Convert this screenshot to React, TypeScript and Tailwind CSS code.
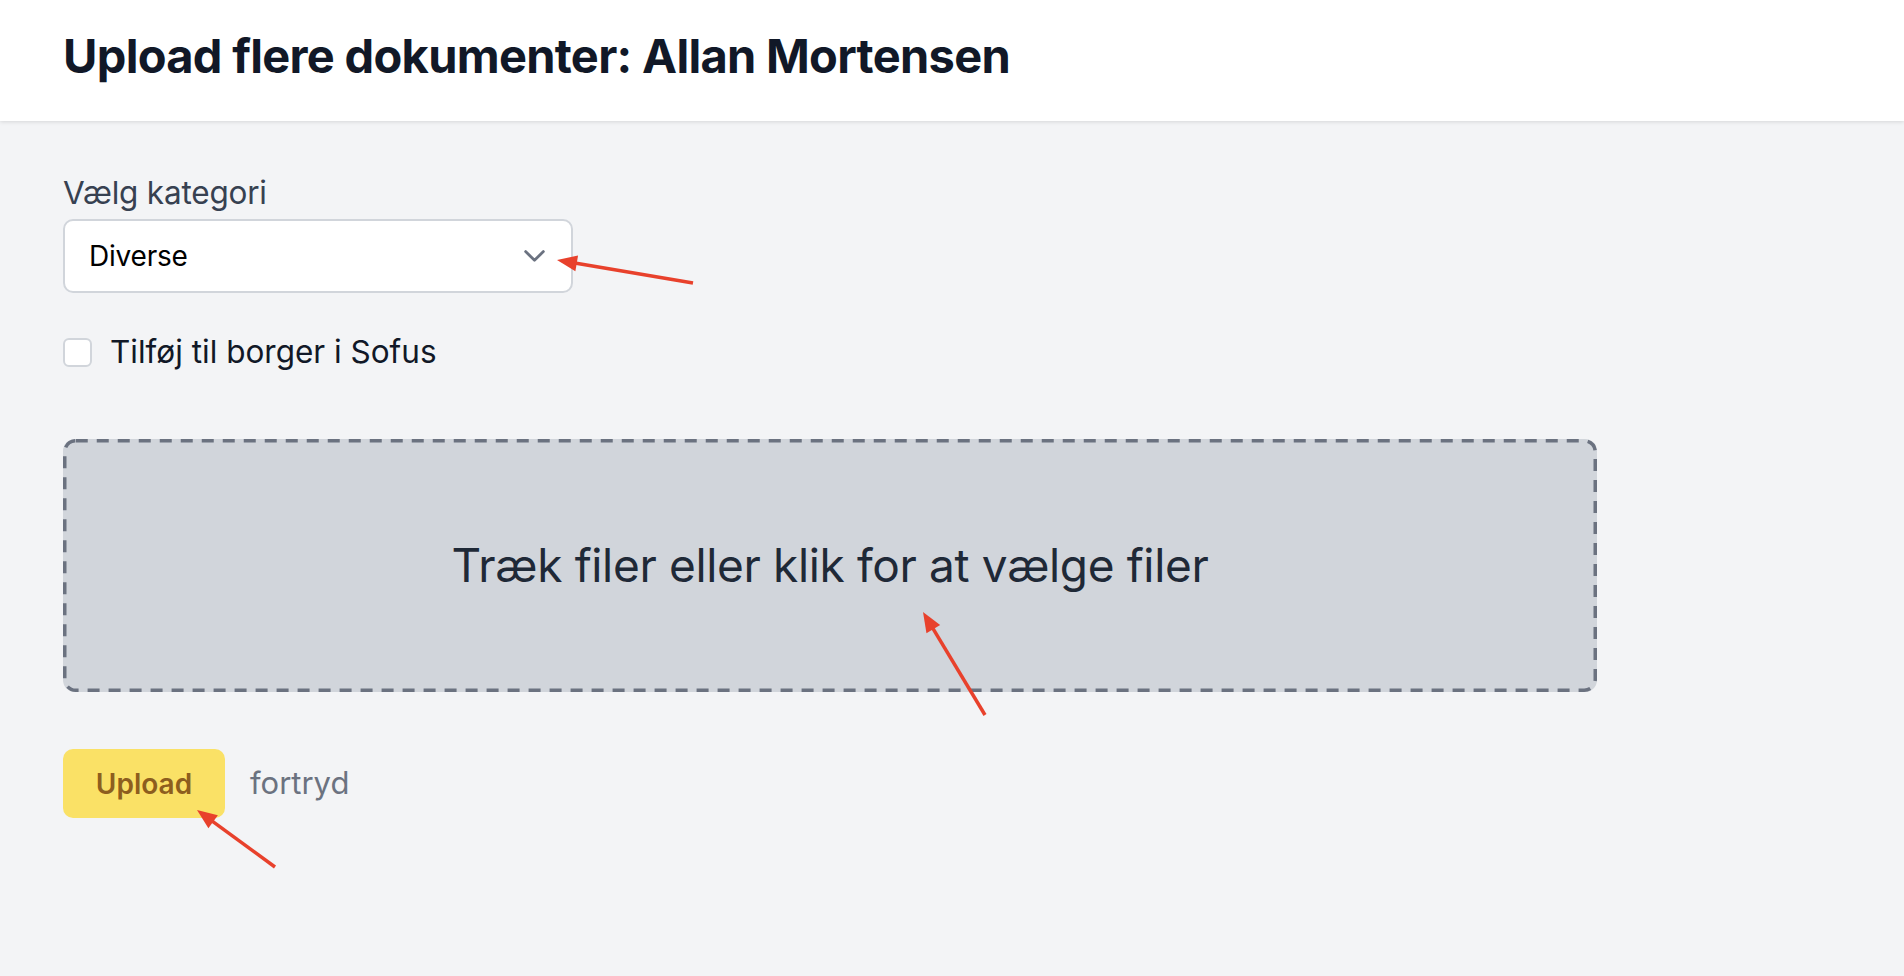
import React from "react";

type Arrow = { x1: number; y1: number; x2: number; y2: number };

const arrows: Arrow[] = [
  { x1: 693, y1: 283, x2: 557, y2: 260 },
  { x1: 985, y1: 715, x2: 923, y2: 612 },
  { x1: 275, y1: 867, x2: 197, y2: 810 },
];

function ArrowShape({ a }: { a: Arrow }) {
  const dx = a.x2 - a.x1;
  const dy = a.y2 - a.y1;
  const len = Math.sqrt(dx * dx + dy * dy);
  const ux = dx / len;
  const uy = dy / len;
  const headLen = 20;
  const headW = 8;
  const bx = a.x2 - ux * headLen;
  const by = a.y2 - uy * headLen;
  const px = -uy;
  const py = ux;
  const pts = `${a.x2},${a.y2} ${bx + px * headW},${by + py * headW} ${bx - px * headW},${by - py * headW}`;
  return (
    <g>
      <line x1={a.x1} y1={a.y1} x2={bx + ux * 2} y2={by + uy * 2} stroke="#e8412c" strokeWidth={3.5} strokeLinecap="butt" />
      <polygon points={pts} fill="#e8412c" />
    </g>
  );
}

export default function App() {
  const W = 1534;
  const H = 253;
  return (
    <div
      className="relative min-h-[976px] w-full bg-[#f3f4f6]"
      style={{ fontFamily: "Inter, 'Noto Sans', sans-serif" }}
    >
      <header className="h-[121px] bg-white shadow-[0_1px_4px_rgba(0,0,0,0.12)] px-[63px] pt-[32px]">
        <h1 className="text-[47px] leading-[48px] font-bold text-[#111827] tracking-[-0.7px]">
          Upload flere dokumenter: Allan Mortensen
        </h1>
      </header>

      <main className="px-[63px] pt-[54px]">
        <label className="block text-[31.5px] leading-[36px] text-[#374151] tracking-[-0.2px]">Vælg kategori</label>
        <div className="mt-[8px] flex h-[74px] w-[510px] items-center justify-between rounded-[10px] border-2 border-[#d1d5db] bg-white pl-[24px] pr-[26px]">
          <span className="text-[28px] text-black tracking-[-0.2px]">Diverse</span>
          <svg width="21" height="12" viewBox="0 0 21 12" fill="none">
            <path d="M1.6 1.6 L10.5 10.2 L19.4 1.6" stroke="#6b7280" strokeWidth="2.8" strokeLinecap="round" strokeLinejoin="round" />
          </svg>
        </div>

        <div className="mt-[41px] flex items-center gap-[18px]">
          <div className="h-[29px] w-[29px] rounded-[6px] border-2 border-[#d1d5db] bg-white" />
          <span className="text-[31.5px] leading-[36px] text-[#111827]">Tilføj til borger i Sofus</span>
        </div>

        <div className="relative mt-[69px] flex h-[253px] w-[1534px] items-center justify-center rounded-[12px] bg-[#d1d5db]">
          <svg className="pointer-events-none absolute left-0 top-0" width={W} height={H}>
            <rect
              x={1.75}
              y={1.75}
              width={W - 3.5}
              height={H - 3.5}
              rx={11}
              ry={11}
              fill="none"
              stroke="#6b7280"
              strokeWidth={3.5}
              strokeDasharray="12 9"
            />
          </svg>
          <span className="relative text-[46px] text-[#1f2937] tracking-[-0.35px]">Træk filer eller klik for at vælge filer</span>
        </div>

        <div className="mt-[57px] flex items-center gap-[25px]">
          <button className="flex h-[69px] w-[162px] items-center justify-center rounded-[10px] bg-[#fae166] text-[28px] font-semibold text-[#8d5e1e]">
            Upload
          </button>
          <span className="text-[31px] text-[#6b7280]">fortryd</span>
        </div>
      </main>

      <svg className="pointer-events-none absolute left-0 top-0" width="1904" height="976">
        {arrows.map((a, i) => (
          <ArrowShape key={i} a={a} />
        ))}
      </svg>
    </div>
  );
}
